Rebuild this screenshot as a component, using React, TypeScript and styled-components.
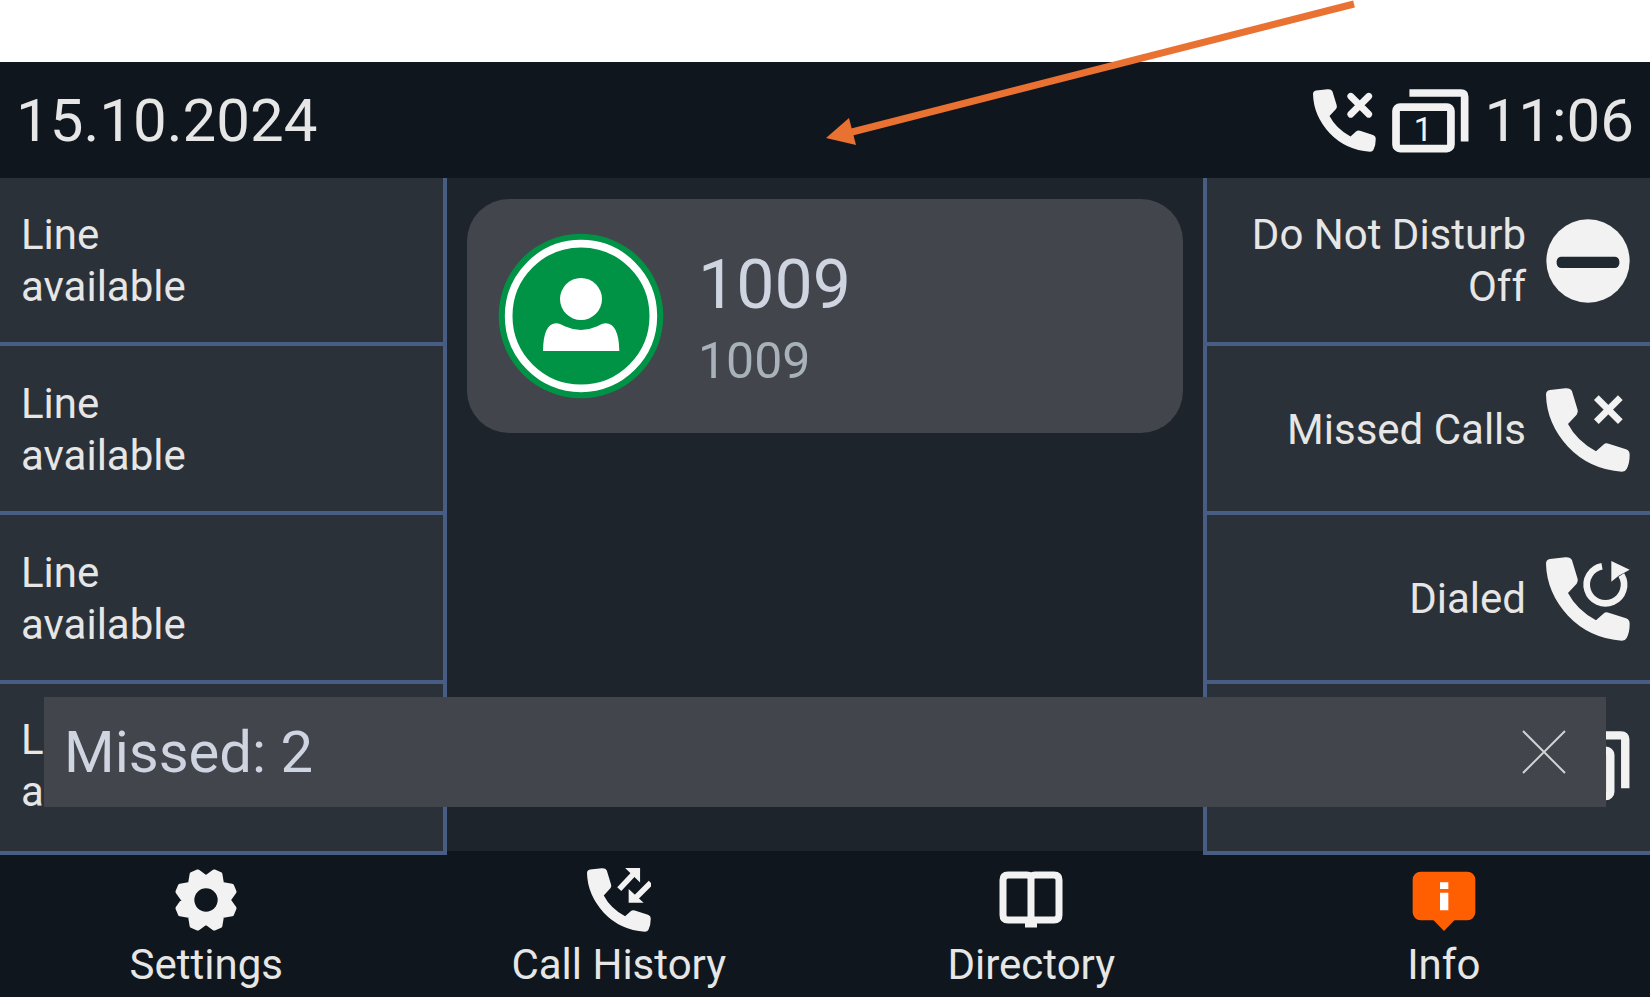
import React from "react";
import styled, { createGlobalStyle } from "styled-components";

const colors = {
  bar: "#0f161d",
  panel: "#2b3138",
  stage: "#1e242b",
  raised: "#42454b",
  rule: "#475d83",
  text: "#e6e6e6",
  icon: "#f2f2f2",
  title: "#ced4e0",
  muted: "#a9b2ba",
  online: "#009345",
  alert: "#ff5f00",
  pointer: "#e97132",
};

const GlobalStyle = createGlobalStyle`
  * { box-sizing: border-box; }
  body {
    margin: 0;
    background: #ffffff;
    font-family: Roboto, "Liberation Sans", sans-serif;
  }
  button { font: inherit; color: inherit; border: 0; padding: 0; background: none; cursor: pointer; }
  svg { display: block; flex: none; }
`;

const Page = styled.div`
  position: relative;
  display: flex;
  flex-direction: column;
  min-height: 100vh;
  padding-top: 62px;
  overflow: hidden;
`;

const StatusBar = styled.header`
  display: flex;
  align-items: center;
  justify-content: space-between;
  padding: 27px 16px 25px;
  background: ${colors.bar};
  color: ${colors.text};
  font-size: 60px;
  line-height: 60px;
`;

const StatusGroup = styled.div`
  display: flex;
  align-items: center;
  gap: 16px;
`;

const Screen = styled.main`
  position: relative;
  flex: 1;
  display: grid;
  grid-template-columns: 447fr 756fr 447fr;
  background: ${colors.stage};
`;

const KeyColumn = styled.section<{ $side: "left" | "right" }>`
  display: grid;
  grid-template-rows: repeat(3, 169fr) 171fr;
  background: ${colors.panel};
  border-style: solid;
  border-color: ${colors.rule};
  border-width: ${(p) => (p.$side === "left" ? "0 4px 0 0" : "0 0 0 4px")};
`;

const Key = styled.button<{ $align: "left" | "right" }>`
  display: flex;
  align-items: center;
  justify-content: ${(p) => (p.$align === "left" ? "flex-start" : "flex-end")};
  gap: 20px;
  padding: 2px 20px 0 21px;
  border-bottom: 4px solid ${colors.rule};
  color: ${colors.text};
  font-size: 42px;
  line-height: 52px;
  text-align: ${(p) => p.$align};

  &:last-child {
    padding-top: 0;
    padding-bottom: 3px;
  }
`;

const Stage = styled.section`
  padding: 21px 20px;
  border-bottom: 4px solid ${colors.bar};
`;

const AccountCard = styled.article`
  display: flex;
  align-items: center;
  gap: 34px;
  padding: 34px 31px;
  border-radius: 42px;
  background: ${colors.raised};
`;

const AccountText = styled.div`
  display: flex;
  flex-direction: column;
  padding-top: 6px;
`;

const AccountName = styled.h1`
  margin: 0;
  color: ${colors.title};
  font-size: 68px;
  font-weight: 400;
  line-height: 84px;
`;

const AccountNumber = styled.p`
  margin: 0;
  color: ${colors.muted};
  font-size: 50px;
  line-height: 68px;
`;

const Toast = styled.div`
  position: absolute;
  left: 44px;
  right: 44px;
  bottom: 48px;
  display: flex;
  align-items: center;
  justify-content: space-between;
  padding: 25px 40px 25px 20px;
  background: ${colors.raised};
  color: ${colors.title};
  font-size: 58px;
  line-height: 60px;
`;

const SoftKeys = styled.nav`
  display: grid;
  grid-template-columns: repeat(4, 1fr);
  padding: 13px 0 6px;
  background: ${colors.bar};
`;

const SoftKey = styled.button`
  display: flex;
  flex-direction: column;
  align-items: center;
  gap: 7px;
  color: ${colors.text};
  font-size: 42px;
  line-height: 52px;
`;

const Pointer = styled.svg`
  position: absolute;
  top: 0;
  left: 50%;
  pointer-events: none;
`;

type Badge = "missed" | "missedBold" | "redial" | "history";

function PhoneIcon({ size, badge }: { size: number; badge: Badge }) {
  return (
    <svg width={size} height={size} viewBox="0 0 252 252" fill={colors.icon} aria-hidden="true">
      <path d="M12 6L58 1Q74 0 78 10L95 66Q97 74 92 80L66 108Q92 158 150 190L172 170Q179 164 188 167L240 184Q251 188 251 200Q251 226 242 243Q238 251 228 251Q130 244 66 176Q2 106 0 20Q0 8 12 6Z" />
      {badge === "missed" && (
        <path d="M151 29L223 101M223 29L151 101" stroke={colors.icon} strokeWidth="20" />
      )}
      {badge === "missedBold" && (
        <path d="M151 29L223 101M223 29L151 101" stroke={colors.icon} strokeWidth="27" strokeLinecap="round" />
      )}
      {badge === "redial" && (
        <>
          <path d="M168 28A56 56 0 1 0 226 54" fill="none" stroke={colors.icon} strokeWidth="20" />
          <path d="M196 12L251 38L218 56L196 74Z" />
        </>
      )}
      {badge === "history" && (
        <>
          <path d="M127 83L190 16M251 58L184 125" stroke={colors.icon} strokeWidth="22" />
          <path d="M150 0H209V57ZM164 83V137H223Z" />
        </>
      )}
    </svg>
  );
}

function WindowsIcon({ width, count }: { width: number; count?: string }) {
  return (
    <svg width={width} viewBox="0 0 230 190" fill="none" stroke={colors.icon} strokeWidth="23">
      <rect x="12" y="54" width="164" height="124" rx="12" />
      <path d="M52 12H206Q217 12 217 23V157" />
      {count && (
        <text x="93" y="156" fill={colors.icon} stroke="none" fontSize="99" textAnchor="middle">
          {count}
        </text>
      )}
    </svg>
  );
}

function DoNotDisturbIcon() {
  return (
    <svg width="84" height="84" viewBox="0 0 252 252" aria-hidden="true">
      <circle cx="126" cy="126" r="125" fill={colors.icon} />
      <rect x="32" y="113" width="188" height="34" rx="14" fill="#1f2932" />
    </svg>
  );
}

function AvatarIcon() {
  return (
    <svg width="166" height="166" viewBox="0 0 498 498" role="img" aria-label="Registered">
      <circle cx="249" cy="249" r="247" fill={colors.online} />
      <circle cx="249" cy="249" r="217" fill="none" stroke="#ffffff" strokeWidth="23" />
      <circle cx="249" cy="198" r="63" fill="#ffffff" />
      <path
        d="M135 354Q136 271 175 271Q185 271 200 280Q249 302 298 280Q313 271 323 271Q362 271 364 354Z"
        fill="#ffffff"
      />
    </svg>
  );
}

const gearOutline = Array.from({ length: 8 }, (_, tooth) =>
  [
    [0, 68],
    [16, 89],
    [29, 89],
  ].map(([offset, radius]) => {
    const angle = ((tooth * 45 + offset) * Math.PI) / 180;
    return `${(96 + radius * Math.sin(angle)).toFixed(1)},${(96 - radius * Math.cos(angle)).toFixed(1)}`;
  }).join(" ")
).join(" ");

function GearIcon() {
  return (
    <svg width="64" height="64" viewBox="0 0 192 192" aria-hidden="true">
      <polygon points={gearOutline} fill={colors.icon} stroke={colors.icon} strokeWidth="12" strokeLinejoin="round" />
      <circle cx="96" cy="96" r="35" fill={colors.bar} />
    </svg>
  );
}

function BookIcon() {
  return (
    <svg width="64" height="64" viewBox="0 0 64 64" fill="none" stroke={colors.icon} strokeWidth="7" aria-hidden="true">
      <path d="M32 11Q32 7 28 7H9Q4 7 4 12V47Q4 52 9 52H55Q60 52 60 47V12Q60 7 55 7H36Q32 7 32 11V54" />
      <path d="M26 57H38" strokeWidth="5" />
    </svg>
  );
}

function InfoIcon() {
  return (
    <svg width="64" height="64" viewBox="0 0 192 192" aria-hidden="true">
      <rect x="2" y="11" width="188" height="146" rx="24" fill={colors.alert} />
      <path d="M64 156H128L96 189Z" fill={colors.alert} />
      <path d="M84 43H109V63H84ZM84 74H109V127H84Z" fill="#ffffff" />
    </svg>
  );
}

const lines = ["line-1", "line-2", "line-3", "line-4"];

const functionKeys = [
  { id: "dnd", label: <>Do Not Disturb<br />Off</>, icon: <DoNotDisturbIcon /> },
  { id: "missed", label: "Missed Calls", icon: <PhoneIcon size={84} badge="missed" /> },
  { id: "dialed", label: "Dialed", icon: <PhoneIcon size={84} badge="redial" /> },
  { id: "windows", label: null, icon: <WindowsIcon width={84} /> },
];

const softKeys = [
  { label: "Settings", icon: <GearIcon /> },
  { label: "Call History", icon: <PhoneIcon size={64} badge="history" /> },
  { label: "Directory", icon: <BookIcon /> },
  { label: "Info", icon: <InfoIcon /> },
];

export default function App() {
  return (
    <Page>
      <GlobalStyle />
      <StatusBar>
        <time dateTime="2024-10-15">15.10.2024</time>
        <StatusGroup>
          <PhoneIcon size={63} badge="missedBold" />
          <WindowsIcon width={77} count="1" />
          <time dateTime="11:06">11:06</time>
        </StatusGroup>
      </StatusBar>

      <Screen>
        <KeyColumn $side="left">
          {lines.map((id) => (
            <Key key={id} type="button" $align="left">
              <span>
                Line
                <br />
                available
              </span>
            </Key>
          ))}
        </KeyColumn>

        <Stage>
          <AccountCard>
            <AvatarIcon />
            <AccountText>
              <AccountName>1009</AccountName>
              <AccountNumber>1009</AccountNumber>
            </AccountText>
          </AccountCard>
        </Stage>

        <KeyColumn $side="right">
          {functionKeys.map((key) => (
            <Key key={key.id} type="button" $align="right" aria-label={key.label ? undefined : "Windows"}>
              {key.label && <span>{key.label}</span>}
              {key.icon}
            </Key>
          ))}
        </KeyColumn>

        <Toast role="status">
          <span>Missed: 2</span>
          <button type="button" aria-label="Dismiss">
            <svg width="44" height="44" viewBox="0 0 44 44" stroke="#d0d2d4" strokeWidth="2">
              <path d="M1 1L43 43M43 1L1 43" />
            </svg>
          </button>
        </Toast>
      </Screen>

      <SoftKeys>
        {softKeys.map((key) => (
          <SoftKey key={key.label} type="button">
            {key.icon}
            <span>{key.label}</span>
          </SoftKey>
        ))}
      </SoftKeys>

      <Pointer width="532" height="150" viewBox="0 0 532 150" aria-hidden="true">
        <path d="M27 132L529 4" stroke={colors.pointer} strokeWidth="7" />
        <path d="M1 138L24 118L31 145Z" fill={colors.pointer} />
      </Pointer>
    </Page>
  );
}
